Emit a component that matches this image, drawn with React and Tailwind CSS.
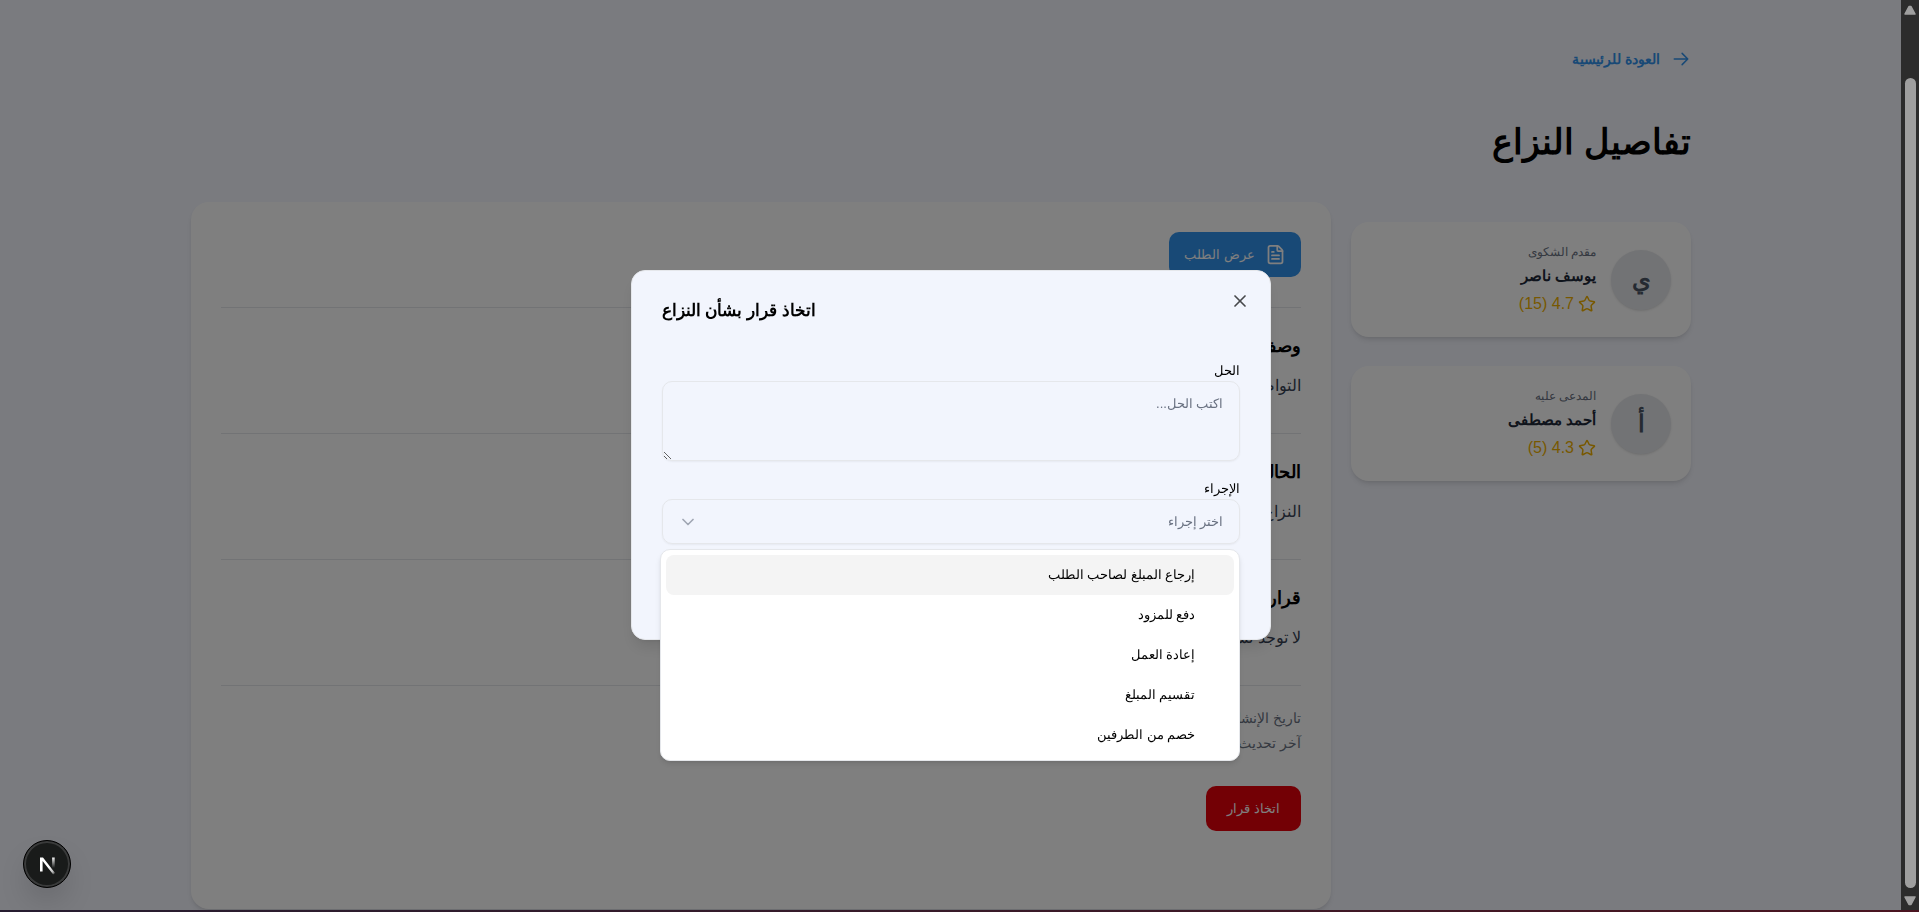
import { FileText, Star, X, ChevronDown } from "lucide-react";

const parties = [
  { role: "مقدم الشكوى", name: "يوسف ناصر", initial: "ي", rating: "4.7 (15)" },
  { role: "المدعى عليه", name: "أحمد مصطفى", initial: "أ", rating: "4.3 (5)" },
];

const sections = [
  { title: "وصف النزاع", body: "التواصل مع مقدم الخدمة" },
  { title: "الحالة", body: "النزاع قيد المراجعة" },
  { title: "قرار الإدارة", body: "لا توجد تسوية حتى الآن" },
];

const actions = [
  "إرجاع المبلغ لصاحب الطلب",
  "دفع للمزود",
  "إعادة العمل",
  "تقسيم المبلغ",
  "خصم من الطرفين",
];

function PartyCard({ role, name, initial, rating }) {
  return (
    <article className="flex items-center gap-[15px] rounded-[18px] bg-white px-5 pt-5 pb-[19px] shadow-md">
      <div className="flex size-[60px] shrink-0 items-center justify-center rounded-full bg-gray-200 text-2xl font-bold text-gray-600 shadow-sm">
        {initial}
      </div>
      <div>
        <p className="text-xs leading-5 text-gray-500">{role}</p>
        <h2 className="text-[15px] leading-7 font-bold text-gray-800">{name}</h2>
        <p className="flex items-center gap-1 text-base leading-7 text-[#f0b100]">
          <Star className="size-[18px]" />
          <span>{rating}</span>
        </p>
      </div>
    </article>
  );
}

function Scrollbar() {
  return (
    <div className="fixed inset-y-0 right-0 z-50 flex w-[18px] flex-col items-center bg-[#2c2c2c] py-[5px]" aria-hidden="true">
      <svg className="h-2.5 w-3" viewBox="0 0 12 10"><path d="M5 1.5h2L11 9H1z" fill="#9f9f9f" stroke="#9f9f9f" strokeWidth="1.5" strokeLinejoin="round" /></svg>
      <div className="mt-[63px] mb-2 w-[11px] flex-1 rounded-full bg-[#9f9f9f]" />
      <svg className="mb-px h-2.5 w-3" viewBox="0 0 12 10"><path d="M5 8.5h2L11 1H1z" fill="#9f9f9f" stroke="#9f9f9f" strokeWidth="1.5" strokeLinejoin="round" /></svg>
    </div>
  );
}

function DevToolsBadge() {
  return (
    <button type="button" aria-label="Next.js" className="fixed bottom-6 left-[23px] z-50 flex size-12 items-center justify-center rounded-full border border-black bg-[#191b1a] shadow-[inset_0_0_0_2px_#3a3b3b,0_16px_32px_-8px_rgba(0,0,0,0.24)]">
      <svg className="size-10" viewBox="0 0 40 40" fill="none">
        <defs>
          <linearGradient id="diagonal" x1="22" y1="23" x2="28" y2="31" gradientUnits="userSpaceOnUse">
            <stop stopColor="#fff" />
            <stop offset="0.6" stopColor="#fff" stopOpacity="0.7" />
            <stop offset="1" stopColor="#fff" stopOpacity="0" />
          </linearGradient>
          <linearGradient id="stem" x1="26" y1="13" x2="26" y2="24" gradientUnits="userSpaceOnUse">
            <stop stopColor="#fff" />
            <stop offset="1" stopColor="#fff" stopOpacity="0" />
          </linearGradient>
        </defs>
        <path d="M13 13.5h3l12 15.6-1.8 1.4L15.6 17v10.5H13z" fill="url(#diagonal)" />
        <path d="M26.4 13.5V24" stroke="url(#stem)" strokeWidth="2.6" />
      </svg>
    </button>
  );
}

export default function App() {
  return (
    <div dir="rtl" className="h-screen overflow-hidden bg-[#f5f7ff] font-['Liberation_Sans',sans-serif] text-black">
      <div className="mr-[37px] flex flex-col">
        <div className="mx-auto w-full max-w-[1500px] pt-[45px]">
          <a href="#home" className="flex w-fit items-center gap-3 pr-px text-sm leading-7 font-bold text-[#3192ec]">
            <svg className="size-[18px]" viewBox="0 0 24 24" fill="none" stroke="currentColor" strokeWidth="2" strokeLinecap="round" strokeLinejoin="round">
              <path d="M13.5 4.5 21 12l-7.5 7.5M21 12H3" />
            </svg>
            العودة للرئيسية
          </a>
          <h1 className="mt-[42px] text-[35px] leading-[54px] font-bold">تفاصيل النزاع</h1>
        </div>
        <div className="mx-auto mt-[33px] flex w-full max-w-[1500px] items-start gap-5">
          <aside className="mt-5 flex w-[340px] shrink-0 flex-col gap-[29px]">
            {parties.map((p) => <PartyCard key={p.name} {...p} />)}
          </aside>
          <main className="flex-1 rounded-[18px] bg-white px-[30px] pt-[30px] pb-[78px] shadow-md">
            <a href="#order" className="flex h-[45px] w-fit items-center gap-2.5 rounded-[10px] bg-[#3192ec] px-[15px] text-[13px] text-white">
              <FileText className="size-[21px]" />
              عرض الطلب
            </a>
            <div className="mt-[30px] border-t border-gray-200">
              {sections.map((s) => (
                <section key={s.title} className="h-[126px] border-b border-gray-200 pt-6">
                  <h2 className="text-lg leading-7 font-bold">{s.title}</h2>
                  <p className="mt-3 text-base leading-7 text-gray-700">{s.body}</p>
                </section>
              ))}
            </div>
            <div className="mt-5 text-sm leading-[25px] text-gray-500">
              <p>تاريخ الإنشاء: 2025/08/12</p>
              <p>آخر تحديث: 2025/08/12</p>
            </div>
            <button type="button" className="mt-[30px] h-[45px] rounded-[10px] bg-[#e7000b] px-[21px] text-[13px] text-white">اتخاذ قرار</button>
          </main>
        </div>
      </div>

      <div className="fixed inset-0 z-10 bg-black/50" />

      <div className="fixed inset-0 z-20 mr-[18px] mb-0.5 flex items-center justify-center">
        <div role="dialog" aria-labelledby="dialog-title" className="relative h-[370px] w-full max-w-[640px] rounded-[14px] border border-gray-200 bg-[#f2f5fd] px-[30px] pt-[26px] shadow-lg">
          <button type="button" aria-label="إغلاق" className="absolute top-5 right-5 opacity-70">
            <X className="size-5" />
          </button>
          <h2 id="dialog-title" className="text-left text-[17px] leading-7 font-bold">اتخاذ قرار بشأن النزاع</h2>
          <div className="mt-9">
            <label htmlFor="solution" className="block text-[13px] leading-5">الحل</label>
            <textarea id="solution" placeholder="اكتب الحل..." className="block h-20 w-full rounded-[10px] border border-gray-200 px-[15px] py-2.5 text-[13px] leading-6 shadow-xs placeholder:text-gray-500" />
          </div>
          <div className="mt-[18px]">
            <label htmlFor="action" className="block text-[13px] leading-5">الإجراء</label>
            <button id="action" type="button" aria-expanded="true" aria-haspopup="listbox" className="flex h-[45px] w-full items-center justify-between rounded-[10px] border border-gray-200 px-[15px] text-[13px] text-gray-500 shadow-xs">
              اختر إجراء
              <ChevronDown className="size-5 opacity-60" />
            </button>
          </div>
          <ul role="listbox" className="absolute top-[278px] right-[30px] left-7 rounded-[10px] border border-gray-200 bg-white p-[5px] shadow-md">
            {actions.map((a, i) => (
              <li key={a} role="option" aria-selected={i === 0} className="flex h-10 items-center rounded-lg pr-[38px] text-[13px] aria-selected:bg-[#f4f4f4]">{a}</li>
            ))}
          </ul>
        </div>
      </div>

      <Scrollbar />
      <DevToolsBadge />
      <div className="fixed inset-x-0 bottom-0 z-50 h-0.5 bg-gradient-to-r from-[#261c30] to-[#4a1420]" />
    </div>
  );
}
